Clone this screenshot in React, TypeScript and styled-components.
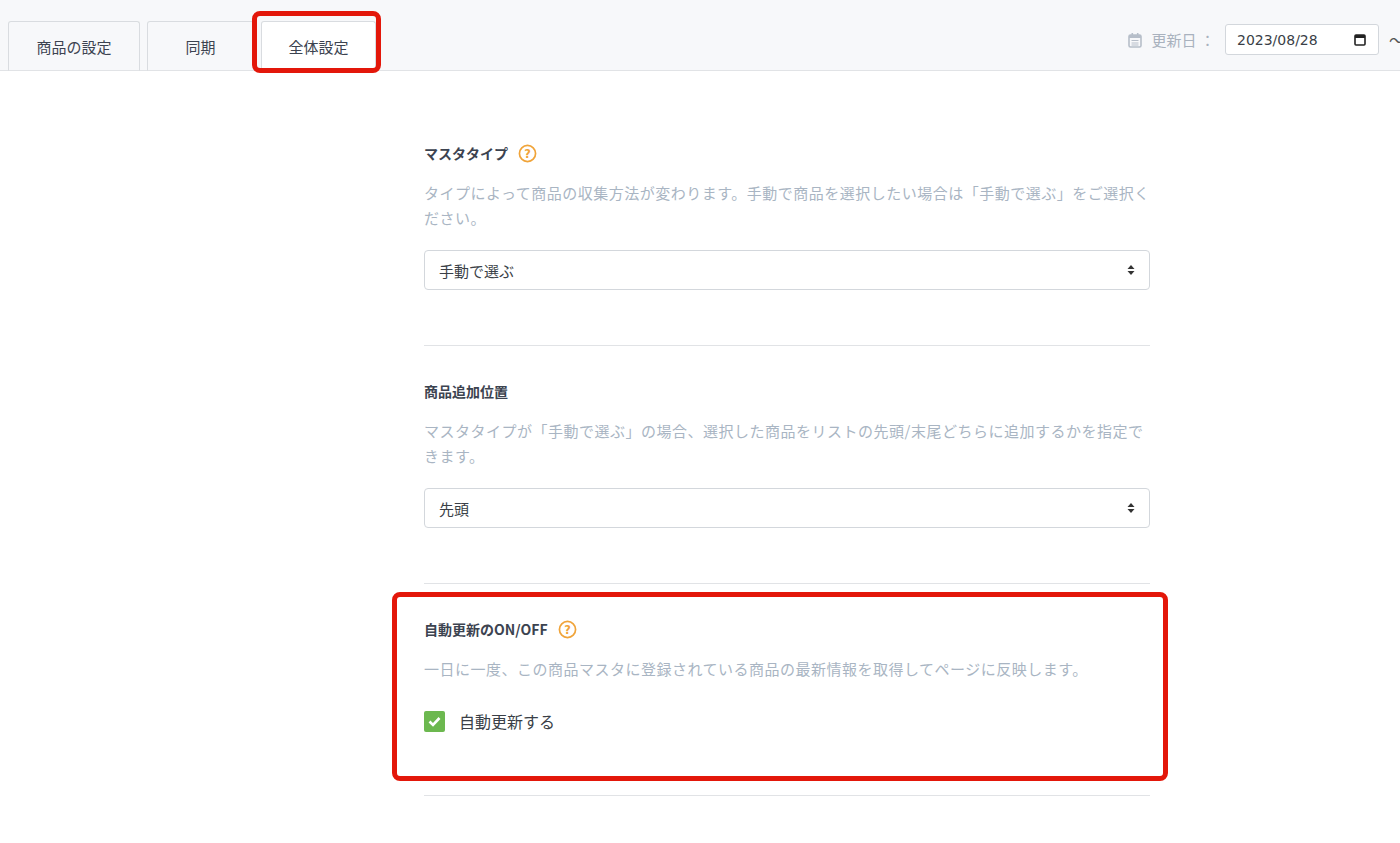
import React from 'react';
import styled, { createGlobalStyle } from 'styled-components';

const Global = createGlobalStyle`
  body { margin: 0; font-family: "Noto Sans CJK JP", "Noto Sans", sans-serif; background: #fff; overflow: hidden; }
`;

const TopBar = styled.div`
  height: 70px;
  background: #f7f8fa;
  border-bottom: 1px solid #e1e3e6;
  display: flex;
  align-items: flex-end;
  padding-left: 8px;
  position: relative;
`;

const Tabs = styled.div`
  display: flex;
  gap: 7px;
  margin-bottom: -1px;
`;

const Tab = styled.div<{ $active?: boolean; $w: number }>`
  position: relative;
  width: ${p => p.$w}px;
  height: 50px;
  box-sizing: border-box;
  border: 1px solid #d9dce0;
  border-bottom: ${p => (p.$active ? '1px solid #fff' : '1px solid #e1e3e6')};
  border-radius: 3px 3px 0 0;
  background: ${p => (p.$active ? '#fff' : '#f7f8fa')};
  display: flex;
  align-items: center;
  justify-content: center;
  font-size: 15px;
  color: #3c4350;
`;

const Highlight = styled.div<{ $top: number; $left: number; $right: number; $bottom: number }>`
  position: absolute;
  top: ${p => p.$top}px;
  left: ${p => p.$left}px;
  right: ${p => p.$right}px;
  bottom: ${p => p.$bottom}px;
  border: 5px solid #e3170a;
  border-radius: 8px;
  pointer-events: none;
`;

const DateArea = styled.div`
  position: absolute;
  right: 0;
  top: 24px;
  display: flex;
  align-items: center;
  gap: 10px;
  font-size: 15px;
  color: #a9b2be;
`;

const DateBox = styled.div`
  width: 154px;
  height: 31px;
  box-sizing: border-box;
  border: 1px solid #d3d7dc;
  border-radius: 3px;
  background: #fff;
  display: flex;
  align-items: center;
  justify-content: space-between;
  padding: 0 12px 0 11px;
  font-family: "DejaVu Sans", sans-serif;
  font-size: 14px;
  color: #3a3f47;
`;

const Main = styled.div`
  width: 726px;
  margin-left: 424px;
  padding-top: 61px;
`;

const Section = styled.div<{ $pb: number }>`
  position: relative;
  padding-bottom: ${p => p.$pb}px;
  border-bottom: 1px solid #e1e3e6;
  margin-bottom: 34px;
`;

const Title = styled.div`
  font-size: 14px;
  font-weight: 700;
  color: #3c4350;
  display: flex;
  align-items: center;
  gap: 10px;
  height: 22px;
  margin-top: 10px;
`;

const Desc = styled.div`
  margin-top: 16px;
  font-size: 15px;
  line-height: 25px;
  color: #a9b5c3;
  letter-spacing: 0.5px;
`;

const Select = styled.div`
  margin-top: 20px;
  height: 40px;
  box-sizing: border-box;
  border: 1px solid #d3d7dc;
  border-radius: 4px;
  display: flex;
  align-items: center;
  justify-content: space-between;
  padding: 0 14px;
  font-size: 15px;
  color: #3a3f47;
`;

const CheckRow = styled.label`
  display: flex;
  align-items: center;
  gap: 14px;
  margin-top: 28px;
  font-size: 16px;
  color: #3a3f47;
`;

const Box = styled.span`
  width: 21px;
  height: 21px;
  background: #6cb84f;
  border-radius: 2px;
  display: flex;
  align-items: center;
  justify-content: center;
`;

const Help = () => (
  <svg width="19" height="19" viewBox="0 0 20 20">
    <circle cx="10" cy="10" r="8.5" fill="none" stroke="#f0a43a" strokeWidth="1.8" />
    <text x="10" y="14.3" textAnchor="middle" fontSize="12" fontWeight="700" fill="#f0a43a" fontFamily="DejaVu Sans">?</text>
  </svg>
);

const Updown = () => (
  <svg width="8" height="12" viewBox="0 0 8 12">
    <path d="M4 1 L7.5 5 H0.5 Z M4 11 L7.5 7 H0.5 Z" fill="#333" />
  </svg>
);

export default function App() {
  return (
    <>
      <Global />
      <TopBar>
        <Tabs>
          <Tab $w={132}>商品の設定</Tab>
          <Tab $w={107}>同期</Tab>
          <Tab $w={115} $active>
            全体設定
            <Highlight $top={-11} $left={-10} $right={-6} $bottom={-3} />
          </Tab>
        </Tabs>
        <DateArea>
          <svg width="14" height="16" viewBox="0 0 14 16">
            <rect x="1" y="3" width="12" height="12" rx="1.5" fill="none" stroke="#b6bec9" strokeWidth="1.6" />
            <rect x="1" y="3" width="12" height="3" fill="#b6bec9" />
            <rect x="3.5" y="1" width="1.6" height="3" fill="#b6bec9" />
            <rect x="8.9" y="1" width="1.6" height="3" fill="#b6bec9" />
            <path d="M3.5 8.5h7M3.5 11h7M3.5 13h7" stroke="#b6bec9" strokeWidth="1" />
          </svg>
          <span>更新日 ：</span>
          <DateBox>
            2023/08/28
            <svg width="12" height="13" viewBox="0 0 12 13">
              <rect x="1" y="2" width="10" height="10" rx="1" fill="none" stroke="#222" strokeWidth="1.6" />
              <rect x="1" y="2" width="10" height="3" fill="#222" />
            </svg>
          </DateBox>
          <span style={{ color: '#555', marginRight: -4 }}>〜</span>
        </DateArea>
      </TopBar>
      <Main>
        <Section $pb={55}>
          <Title>マスタタイプ <Help /></Title>
          <Desc>タイプによって商品の収集方法が変わります。手動で商品を選択したい場合は「手動で選ぶ」をご選択ください。</Desc>
          <Select>手動で選ぶ <Updown /></Select>
        </Section>
        <Section $pb={55}>
          <Title>商品追加位置</Title>
          <Desc>マスタタイプが「手動で選ぶ」の場合、選択した商品をリストの先頭/末尾どちらに追加するかを指定できます。</Desc>
          <Select>先頭 <Updown /></Select>
        </Section>
        <Section $pb={62}>
          <Title>自動更新のON/OFF <Help /></Title>
          <Desc>一日に一度、この商品マスタに登録されている商品の最新情報を取得してページに反映します。</Desc>
          <CheckRow>
            <Box>
              <svg width="13" height="11" viewBox="0 0 13 11">
                <path d="M1.5 5.5 L5 9 L11.5 2" fill="none" stroke="#fff" strokeWidth="2.6" />
              </svg>
            </Box>
            自動更新する
          </CheckRow>
          <Highlight $top={-26} $left={-32} $right={-18} $bottom={14} />
        </Section>
      </Main>
    </>
  );
}
